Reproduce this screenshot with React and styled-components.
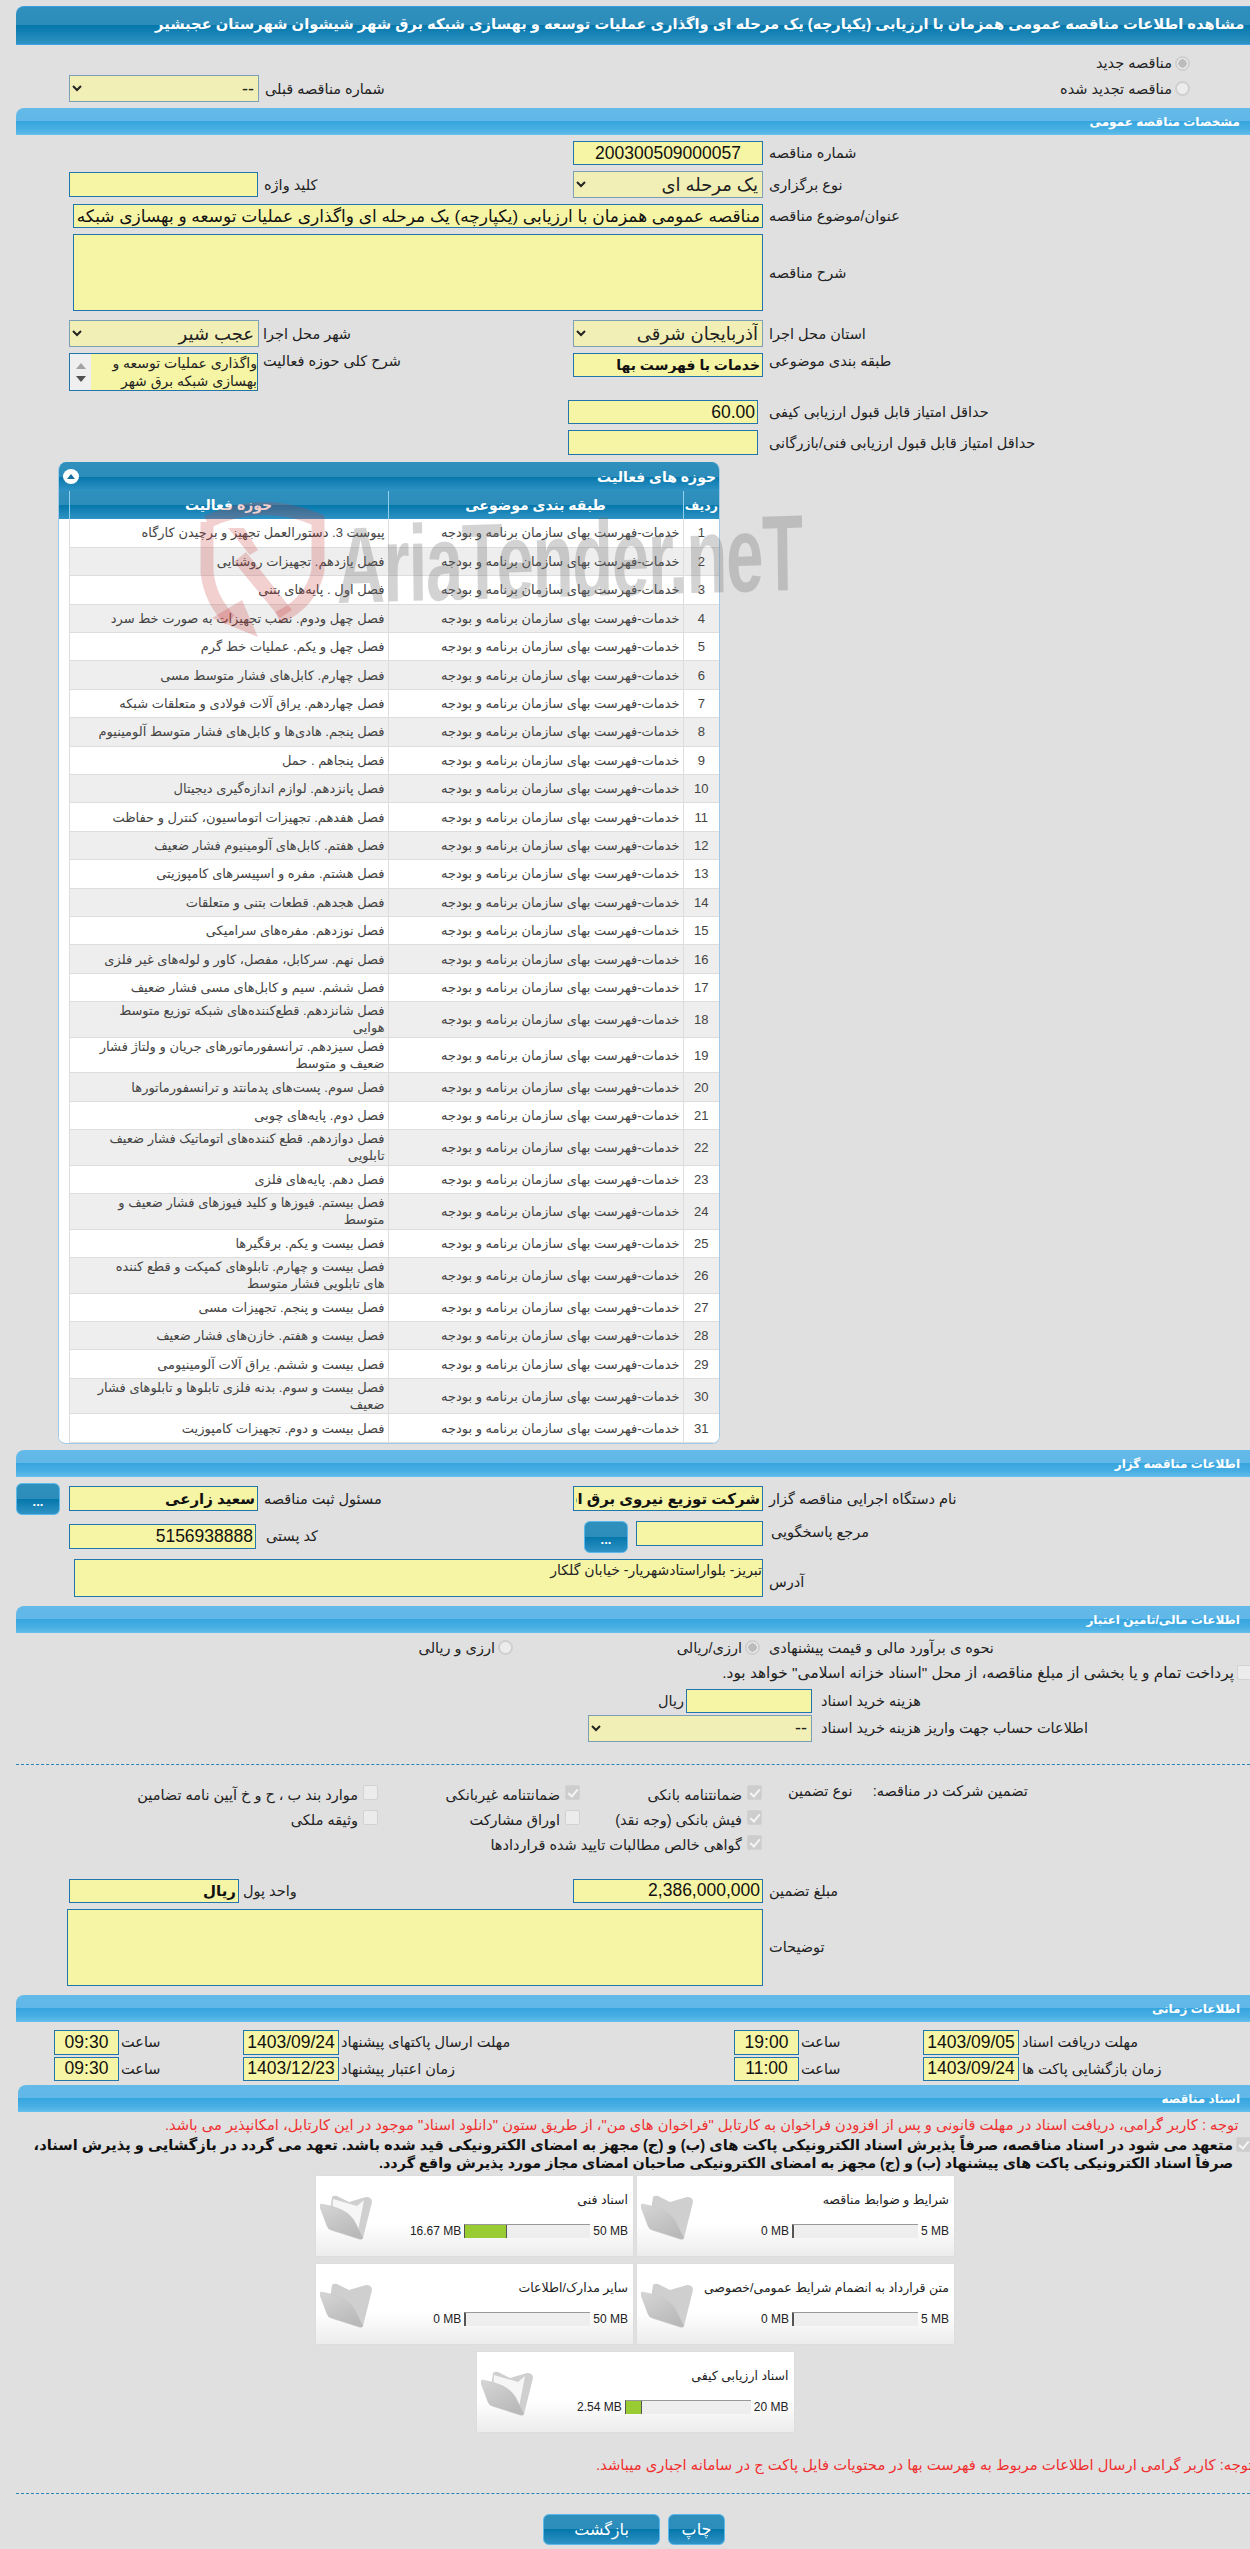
import styled, { createGlobalStyle } from "styled-components";

const GlobalStyle = createGlobalStyle`
  html, body {
    margin: 0;
    padding: 0;
    background: #e0e0e0;
  }
  body {
    font-family: "Liberation Sans", "DejaVu Sans", sans-serif;
    font-size: 14.5px;
    color: #222;
  }
`;

const darkBar = `linear-gradient(to bottom, #2f8fbd 0%, #2c8dbb 50%, #0477ab 50%, #1f87ba 80%, #2f93c5 100%)`;
const lightBar = `linear-gradient(to bottom, #63b9e8 0%, #61b8e8 50%, #36a5df 50%, #47aee3 80%, #5dbbe9 100%)`;

const Page = styled.div`
  position: relative;
  width: 1250px;
  height: 2549px;
  overflow: hidden;
  padding-top: 6px;
  box-sizing: border-box;
`;
const MainTitle = styled.h1`
  margin: 0 0 0 16px;
  height: 39px;
  padding-left: 139px;
  box-sizing: border-box;
  background: ${darkBar};
  border-top: 1px solid #3b9be0;
  border-bottom: 1px solid #3ba0e5;
  border-radius: 8px 0 0 0;
  color: #fff;
  font-size: 14.7px;
  font-weight: bold;
  line-height: 35px;
  white-space: nowrap;
  overflow: hidden;
`;
const SectionBar = styled.h2`
  margin: ${(p) => p.$mt || 0}px 0 0 ${(p) => p.$left || 16}px;
  height: 27px;
  padding-right: 10px;
  box-sizing: border-box;
  background: ${lightBar};
  border-bottom: 1px solid #66c0ee;
  border-radius: 8px 0 0 0;
  color: #fff;
  font-size: 12px;
  font-weight: bold;
  line-height: 28px;
  direction: rtl;
`;
const Row = styled.div`
  display: grid;
  grid-template-columns: ${(p) => p.$cols || "573px 1fr"};
  align-items: ${(p) => p.$align || "center"};
  margin-top: ${(p) => p.$mt || 0}px;
  height: ${(p) => (p.$h ? `${p.$h}px` : "auto")};
`;
const Cell = styled.div`
  display: flex;
  align-items: ${(p) => p.$align || "center"};
  padding-left: ${(p) => p.$inset || 0}px;
  padding-top: ${(p) => p.$top || 0}px;
  gap: ${(p) => (p.$gap === undefined ? 6 : p.$gap)}px;
  min-width: 0;
`;
const Label = styled.span`
  white-space: nowrap;
  direction: rtl;
  text-align: left;
  margin-top: ${(p) => p.$mt || 0}px;
  ${(p) => p.$w && `width: ${p.$w}px;`}
`;
const Field = styled.input`
  box-sizing: border-box;
  width: ${(p) => p.$w}px;
  height: ${(p) => p.$h || 24}px;
  flex: none;
  margin: 0;
  padding: 0 2px;
  background: #f6f5a5;
  border: 1px solid #2376ac;
  color: #111;
  font-family: inherit;
  font-size: ${(p) => p.$size || 17.5}px;
  font-weight: ${(p) => (p.$bold ? "bold" : "normal")};
  text-align: ${(p) => p.$text || "right"};
  direction: ${(p) => p.$dir || "rtl"};
  outline: none;
`;
const Area = styled.textarea`
  display: block;
  box-sizing: border-box;
  width: ${(p) => p.$w}px;
  height: ${(p) => p.$h}px;
  flex: none;
  margin: 0;
  padding: 2px 0 0;
  background: #f6f5a5;
  border: 1px solid #2376ac;
  color: #222;
  font-family: inherit;
  font-size: 14px;
  direction: rtl;
  resize: none;
  outline: none;
  overflow: hidden;
`;
const Pick = styled.select`
  box-sizing: border-box;
  width: ${(p) => p.$w}px;
  height: 27px;
  flex: none;
  margin: 0;
  background-color: #f1efb6;
  border: 1px solid #7b9fb4;
  border-radius: 0;
  color: #222;
  font-family: inherit;
  font-size: 18px;
  direction: rtl;
  opacity: 1;
`;
const ListBox = styled.div`
  box-sizing: border-box;
  width: 189px;
  height: 38px;
  display: flex;
  flex: none;
  overflow: hidden;
  background: #f6f5a5;
  border: 1px solid #2376ac;
`;
const ListScroll = styled.div`
  width: 21px;
  flex: none;
  background: #efefef;
  display: flex;
  flex-direction: column;
  align-items: center;
  justify-content: center;
  gap: 7px;
`;
const Arrow = styled.i`
  width: 0;
  height: 0;
  border-left: 5px solid transparent;
  border-right: 5px solid transparent;
  border-${(p) => (p.$down ? "top" : "bottom")}: 6px solid ${(p) => (p.$down ? "#505050" : "#a3a3a3")};
`;
const ListText = styled.div`
  flex: 1;
  direction: rtl;
  font-size: 14px;
  line-height: 18px;
  color: #222;
`;
const Dot = styled.input`
  appearance: none;
  box-sizing: border-box;
  width: 15px;
  height: 15px;
  flex: none;
  margin: 0;
  border: 2px solid #cfcfcf;
  border-radius: 50%;
  background: #ececec;
  &:checked {
    background: radial-gradient(circle, #bcbcbc 0 4px, #ececec 4.5px);
  }
`;
const Tick = styled.input`
  appearance: none;
  position: relative;
  box-sizing: border-box;
  width: 15px;
  height: 15px;
  flex: none;
  margin: ${(p) => p.$mt || 0}px 0 0 0;
  border: 1px solid #d2d2d2;
  border-radius: 2px;
  background: #ececec;
  &:checked {
    background: #cdcdcd;
  }
  &:checked::after {
    content: "";
    position: absolute;
    left: 4px;
    top: 1px;
    width: 4px;
    height: 8px;
    border: solid #f4f4f4;
    border-width: 0 2px 2px 0;
    transform: rotate(40deg);
  }
`;
const RadioLine = styled.div`
  display: flex;
  align-items: center;
  justify-content: flex-end;
  gap: 3px;
  padding-right: ${(p) => p.$pr || 0}px;
  margin-top: ${(p) => p.$mt || 0}px;
  margin-right: ${(p) => p.$mr || 0}px;
  height: ${(p) => (p.$h ? `${p.$h}px` : "auto")};
  font-size: ${(p) => p.$size || 14.5}px;
  white-space: nowrap;
`;
const Panel = styled.section`
  margin: ${(p) => p.$mt || 0}px 0 0 58px;
  width: 662px;
  box-sizing: border-box;
  background: #fff;
  border: 1px solid #9fcbe8;
  border-top: 0;
  border-radius: 8px 8px 8px 8px;
  overflow: hidden;
`;
const PanelHead = styled.div`
  height: 29px;
  display: flex;
  align-items: center;
  justify-content: space-between;
  padding: 0 3px 0 4px;
  background: ${darkBar};
  color: #fff;
  font-size: 14px;
  font-weight: bold;
`;
const Toggle = styled.span`
  width: 16px;
  height: 15px;
  border-radius: 50%;
  background: #fff;
  display: flex;
  align-items: center;
  justify-content: center;
  &::before {
    content: "";
    border-left: 4px solid transparent;
    border-right: 4px solid transparent;
    border-bottom: 5px solid #17709f;
  }
`;
const Table = styled.table`
  width: 100%;
  border-collapse: collapse;
  table-layout: fixed;
  direction: rtl;
  font-size: 13px;
  color: #444;
`;
const HeadCell = styled.th`
  height: 28px;
  padding: 0;
  background: ${darkBar};
  border-left: 1px solid #8fd0ef;
  color: #fff;
  font-size: ${(p) => p.$size || 14}px;
  font-weight: bold;
  white-space: nowrap;
  &:last-child {
    border-left: 0;
  }
`;
const BodyRow = styled.tr`
  background: ${(p) => (p.$alt ? "#eeeeee" : "#ffffff")};
`;
const BodyCell = styled.td`
  height: 28.4px;
  padding: 0.3px 3px;
  box-sizing: border-box;
  border-left: 1px solid #ddd;
  border-bottom: 1px solid #ddd;
  line-height: 17px;
  text-align: ${(p) => p.$text || "right"};
  white-space: pre-line;
`;
const FillCell = styled.td`
  background: #fff;
  padding: 0;
`;
const Dashed = styled.hr`
  margin: ${(p) => p.$mt || 0}px 0 0 ${(p) => p.$left || 16}px;
  border: 0;
  border-top: 1px dashed #2a86b8;
`;
const BlueButton = styled.button`
  box-sizing: border-box;
  width: ${(p) => p.$w}px;
  height: ${(p) => p.$h}px;
  flex: none;
  margin: 0;
  padding: ${(p) => p.$pt || 0}px 0 0;
  background: ${darkBar};
  border: 1px solid #5ab8ea;
  border-radius: 6px;
  color: #fff;
  font-family: inherit;
  font-size: ${(p) => p.$size || 16}px;
  font-weight: ${(p) => (p.$bold ? "bold" : "normal")};
`;
const Options = styled.div`
  display: grid;
  grid-template-columns: 378px 202px 182px 1fr;
  grid-auto-rows: 25px;
  margin-top: 18px;
`;
const Option = styled.div`
  grid-column: ${(p) => p.$col};
  display: flex;
  align-items: center;
  justify-content: flex-end;
  gap: 5px;
  white-space: nowrap;
`;
const Caption = styled.div`
  display: flex;
  gap: 20px;
  padding-left: 26px;
  white-space: nowrap;
  direction: ltr;
`;
const NoteLine = styled.div`
  height: 18px;
  line-height: 18px;
  margin-top: ${(p) => p.$mt || 0}px;
  padding-left: ${(p) => p.$left || 0}px;
  color: ${(p) => p.$color || "#111"};
  font-size: ${(p) => p.$size || 14.7}px;
  font-weight: ${(p) => (p.$bold ? "bold" : "normal")};
  white-space: nowrap;
  overflow: hidden;
`;
const BoldFirstLine = styled.div`
  display: flex;
  justify-content: flex-end;
  align-items: center;
  gap: 3px;
  height: 18px;
  margin-top: 2px;
  font-size: 14.7px;
  font-weight: bold;
  color: #111;
  white-space: nowrap;
  margin-right: -1px;
`;
const CardWrap = styled.div`
  display: flex;
  flex-wrap: wrap;
  justify-content: center;
  gap: 8px 4px;
  width: 638px;
  margin: 4px 0 0 316px;
  direction: rtl;
`;
const Card = styled.div`
  box-sizing: border-box;
  width: 317px;
  height: 80px;
  display: flex;
  direction: ltr;
  background: linear-gradient(to bottom, #fff 0%, #fff 60%, #ececec 100%);
  box-shadow: 0 0 1px #cfcfcf;
`;
const CardBody = styled.div`
  flex: 1;
  padding: 16px 5px 0 0;
`;
const CardTitle = styled.div`
  direction: rtl;
  font-size: 12.5px;
  line-height: 17px;
  color: #222;
  white-space: nowrap;
`;
const Usage = styled.div`
  display: flex;
  justify-content: flex-end;
  align-items: center;
  gap: 3px;
  margin-top: 15px;
  font-size: 12px;
  color: #222;
`;
const Meter = styled.div`
  box-sizing: border-box;
  width: 126px;
  height: 14px;
  flex: none;
  background: #eee;
  border-top: 1px solid #999;
  border-left: 1px solid #555;
`;
const MeterFill = styled.div`
  height: 100%;
  box-sizing: border-box;
  background: #99cc33;
  border-right: 1px solid #555;
`;
const FolderIcon = styled.svg`
  flex: none;
  width: 52px;
  height: 46px;
  margin: 19px 0 0 4px;
`;
const Actions = styled.div`
  display: flex;
  gap: 8px;
  margin-top: 20px;
  padding-left: 543px;
`;
const Watermark = styled.div`
  position: absolute;
  left: 200px;
  top: 500px;
  width: 600px;
  height: 140px;
  pointer-events: none;
`;
const WaterShield = styled.svg`
  position: absolute;
  left: 0;
  top: 0;
  width: 125px;
  height: 140px;
`;
const WaterText = styled.div`
  position: absolute;
  left: 136px;
  top: 12px;
  font-family: "Liberation Sans", sans-serif;
  font-size: 108px;
  font-weight: bold;
  line-height: 108px;
  letter-spacing: -2px;
  color: rgba(110, 110, 110, 0.3);
  white-space: nowrap;
  direction: ltr;
  transform: scaleX(0.62) rotate(-1deg);
  transform-origin: left top;
`;

const BIDDER = "خدمات-فهرست بهای سازمان برنامه و بودجه";
const ACTIVITIES = [
  "پیوست 3. دستورالعمل تجهیز و برچیدن کارگاه",
  "فصل یازدهم. تجهیزات روشنایی",
  "فصل اول . پایه‌های بتنی",
  "فصل چهل ودوم. نصب تجهیزات به صورت خط سرد",
  "فصل چهل و یکم. عملیات خط گرم",
  "فصل چهارم. کابل‌های فشار متوسط مسی",
  "فصل چهاردهم. یراق آلات فولادی و متعلقات شبکه",
  "فصل پنجم. هادی‌ها و کابل‌های فشار متوسط آلومینیوم",
  "فصل پنجاهم . حمل",
  "فصل پانزدهم. لوازم اندازه‌گیری دیجیتال",
  "فصل هفدهم. تجهیزات اتوماسیون، کنترل و حفاظت",
  "فصل هفتم. کابل‌های آلومینیوم فشار ضعیف",
  "فصل هشتم. مفره و اسپیسرهای کامپوزیتی",
  "فصل هجدهم. قطعات بتنی و متعلقات",
  "فصل نوزدهم. مفره‌های سرامیکی",
  "فصل نهم. سرکابل، مفصل، کاور و لوله‌های غیر فلزی",
  "فصل ششم. سیم و کابل‌های مسی فشار ضعیف",
  "فصل شانزدهم. قطع‌کننده‌های شبکه توزیع متوسط\nهوایی",
  "فصل سیزدهم. ترانسفورماتورهای جریان و ولتاژ فشار\nضعیف و متوسط",
  "فصل سوم. پست‌های پدمانتد و ترانسفورماتورها",
  "فصل دوم. پایه‌های چوبی",
  "فصل دوازدهم. قطع کننده‌های اتوماتیک فشار ضعیف\nتابلویی",
  "فصل دهم. پایه‌های فلزی",
  "فصل بیستم. فیوزها و کلید فیوزهای فشار ضعیف و\nمتوسط",
  "فصل بیست و یکم. برقگیرها",
  "فصل بیست و چهارم. تابلوهای کمپکت و قطع کننده\nهای تابلویی فشار متوسط",
  "فصل بیست و پنجم. تجهیزات مسی",
  "فصل بیست و هفتم. خازن‌های فشار ضعیف",
  "فصل بیست و ششم. یراق آلات آلومینیومی",
  "فصل بیست و سوم. بدنه فلزی تابلوها و تابلوهای فشار\nضعیف",
  "فصل بیست و دوم. تجهیزات کامپوزیت",
];
const DOCS = [
  { title: "شرایط و ضوابط مناقصه", used: 0, max: 5 },
  { title: "اسناد فنی", used: 16.67, max: 50 },
  { title: "متن قرارداد به انضمام شرایط عمومی/خصوصی", used: 0, max: 5 },
  { title: "سایر مدارک/اطلاعات", used: 0, max: 50 },
  { title: "اسناد ارزیابی کیفی", used: 2.54, max: 20 },
];

const Folder = ({ full }) => (
  <FolderIcon viewBox="0 0 52 46">
    <defs>
      <linearGradient id="fold" x1="0" y1="0" x2="0.6" y2="1">
        <stop offset="0" stopColor="#d6d6d6" />
        <stop offset="1" stopColor="#b9b9b9" />
      </linearGradient>
    </defs>
    <path d="M12 2Q14 0 17 1L29 7L46 2Q52 2 52 7L43 43Q42 45 40 44L8 30Z" fill="#cfcfcf" />
    {full && <path d="M13 4L37 11L44 5L38 36L12 20Z" fill="#f6f6f6" />}
    <path d="M1 9Q14 11 22 15Q32 20 36 29L43 43Q42 45 39 44L11 35Q8 34 7 31L0 12Q0 9 1 9Z" fill="url(#fold)" stroke="#c4c4c4" strokeWidth="0.5" />
  </FolderIcon>
);

export default function App() {
  return (
    <Page>
      <GlobalStyle />
      <MainTitle>
        <span dir="rtl">
          مشاهده اطلاعات مناقصه عمومی همزمان با ارزیابی (یکپارچه) یک مرحله ای واگذاری عملیات توسعه و بهسازی شبکه برق شهر شیشوان شهرستان عجبشیر
        </span>
      </MainTitle>

      <RadioLine $pr={60} $mt={7} $h={22}>
        <span dir="rtl">مناقصه جدید</span>
        <Dot type="radio" name="kind" disabled defaultChecked />
      </RadioLine>
      <Row $mt={1}>
        <Cell $inset={69}>
          <Pick $w={190} disabled>
            <option>--</option>
          </Pick>
          <Label>شماره مناقصه قبلی</Label>
        </Cell>
        <RadioLine $pr={60}>
          <span dir="rtl">مناقصه تجدید شده</span>
          <Dot type="radio" name="kind" disabled />
        </RadioLine>
      </Row>

      <SectionBar $mt={6}>مشخصات مناقصه عمومی</SectionBar>
      <Row $mt={6}>
        <span />
        <Cell>
          <Field $w={190} readOnly value="200300509000057" $text="center" />
          <Label>شماره مناقصه</Label>
        </Cell>
      </Row>
      <Row $mt={6}>
        <Cell $inset={69}>
          <Field $w={189} $h={25} readOnly value="" />
          <Label>کلید واژه</Label>
        </Cell>
        <Cell>
          <Pick $w={190} disabled>
            <option>یک مرحله ای</option>
          </Pick>
          <Label>نوع برگزاری</Label>
        </Cell>
      </Row>
      <Row $mt={6} $cols="73px 1fr">
        <span />
        <Cell>
          <Field $w={690} readOnly $size={17} value="مناقصه عمومی همزمان با ارزیابی (یکپارچه) یک مرحله ای واگذاری عملیات توسعه و بهسازی شبکه برق شهر شیشوان شهرستان عجبشیر" />
          <Label>عنوان/موضوع مناقصه</Label>
        </Cell>
      </Row>
      <Row $mt={6} $cols="73px 1fr">
        <span />
        <Cell>
          <Area $w={690} $h={77} readOnly />
          <Label>شرح مناقصه</Label>
        </Cell>
      </Row>
      <Row $mt={9}>
        <Cell $inset={69} $gap={4}>
          <Pick $w={190} disabled>
            <option>عجب شیر</option>
          </Pick>
          <Label>شهر محل اجرا</Label>
        </Cell>
        <Cell>
          <Pick $w={190} disabled>
            <option>آذربایجان شرقی</option>
          </Pick>
          <Label>استان محل اجرا</Label>
        </Cell>
      </Row>
      <Row $mt={6} $align="start">
        <Cell $inset={69} $align="flex-start" $gap={5}>
          <ListBox>
            <ListScroll>
              <Arrow />
              <Arrow $down />
            </ListScroll>
            <ListText>واگذاری عملیات توسعه و بهسازی شبکه برق شهر شیشوان</ListText>
          </ListBox>
          <Label>شرح کلی حوزه فعالیت</Label>
        </Cell>
        <Cell $align="flex-start">
          <Field $w={190} readOnly $size={14} $bold value="خدمات با فهرست بها" />
          <Label>طبقه بندی موضوعی</Label>
        </Cell>
      </Row>
      <Row $mt={9} $cols="568px 1fr">
        <span />
        <Cell $gap={11}>
          <Field $w={190} readOnly value="60.00" />
          <Label>حداقل امتیاز قابل قبول ارزیابی کیفی</Label>
        </Cell>
      </Row>
      <Row $mt={6} $cols="568px 1fr">
        <span />
        <Cell $gap={11}>
          <Field $w={190} $h={25} readOnly value="" />
          <Label>حداقل امتیاز قابل قبول ارزیابی فنی/بازرگانی</Label>
        </Cell>
      </Row>

      <Panel $mt={7}>
        <PanelHead>
          <Toggle />
          <span dir="rtl">حوزه های فعالیت</span>
        </PanelHead>
        <Table>
          <colgroup>
            <col style={{ width: 36 }} />
            <col style={{ width: 295 }} />
            <col style={{ width: 319 }} />
            <col />
          </colgroup>
          <thead>
            <tr>
              <HeadCell $size={12.5}>ردیف</HeadCell>
              <HeadCell>طبقه بندی موضوعی</HeadCell>
              <HeadCell>حوزه فعالیت</HeadCell>
              <HeadCell />
            </tr>
          </thead>
          <tbody>
            {ACTIVITIES.map((text, i) => (
              <BodyRow key={i} $alt={i % 2 === 1}>
                <BodyCell $text="center">{i + 1}</BodyCell>
                <BodyCell>{BIDDER}</BodyCell>
                <BodyCell>{text}</BodyCell>
                <FillCell />
              </BodyRow>
            ))}
          </tbody>
        </Table>
      </Panel>

      <SectionBar $mt={6}>اطلاعات مناقصه گزار</SectionBar>
      <Row $mt={6} $cols="60px 513px 1fr">
        <Cell $inset={16}>
          <BlueButton $w={44} $h={32} $size={13} $bold $pt={6}>...</BlueButton>
        </Cell>
        <Cell $inset={9}>
          <Field $w={189} $h={25} readOnly $size={15} $bold value="سعید زارعی" />
          <Label>مسئول ثبت مناقصه</Label>
        </Cell>
        <Cell>
          <Field $w={190} $h={25} readOnly $size={15} $bold value="شرکت توزیع نیروی برق استان آذربایجان شرقی" />
          <Label>نام دستگاه اجرایی مناقصه گزار</Label>
        </Cell>
      </Row>
      <Row $mt={6} $align="start">
        <Cell $inset={69} $gap={10} $top={3}>
          <Field $w={187} $h={25} readOnly value="5156938888" />
          <Label>کد پستی</Label>
        </Cell>
        <Cell $inset={11} $gap={8} $align="flex-start">
          <BlueButton $w={44} $h={32} $size={13} $bold $pt={6}>...</BlueButton>
          <Field $w={127} $h={25} readOnly value="" />
          <Label $mt={3}>مرجع پاسخگویی</Label>
        </Cell>
      </Row>
      <Row $mt={6} $cols="74px 1fr">
        <span />
        <Cell>
          <Area $w={689} $h={38} readOnly value="تبریز- بلواراستادشهریار- خیابان گلکار" />
          <Label $mt={8}>آدرس</Label>
        </Cell>
      </Row>

      <SectionBar $mt={9}>اطلاعات مالی/تامین اعتبار</SectionBar>
      <Row $mt={3} $cols="513px 256px 1fr" $h={24}>
        <RadioLine>
          <span dir="rtl">ارزی و ریالی</span>
          <Dot type="radio" name="cur" disabled />
        </RadioLine>
        <RadioLine $pr={9}>
          <span dir="rtl">ارزی/ریالی</span>
          <Dot type="radio" name="cur" disabled defaultChecked />
        </RadioLine>
        <Label>نحوه ی برآورد مالی و قیمت پیشنهادی</Label>
      </Row>
      <RadioLine $h={22} $mt={2} $mr={-2} $size={15.4}>
        <span dir="rtl">پرداخت تمام و یا بخشی از مبلغ مناقصه، از محل "اسناد خزانه اسلامی" خواهد بود.</span>
        <Tick type="checkbox" disabled />
      </RadioLine>
      <Row $mt={5} $cols="662px 1fr">
        <span />
        <Cell $gap={9}>
          <Cell $gap={2}>
            <Label $w={22}>ریال</Label>
            <Field $w={126} readOnly value="" />
          </Cell>
          <Label>هزینه خرید اسناد</Label>
        </Cell>
      </Row>
      <Row $mt={2} $cols="588px 1fr">
        <span />
        <Cell $gap={9}>
          <Pick $w={224} disabled>
            <option>--</option>
          </Pick>
          <Label>اطلاعات حساب جهت واریز هزینه خرید اسناد</Label>
        </Cell>
      </Row>
      <Dashed $mt={22} />

      <Options>
        <Option $col={1}>
          <span dir="rtl">موارد بند ب ، ح و خ آیین نامه تضامین</span>
          <Tick type="checkbox" disabled $mt={-5} />
        </Option>
        <Option $col={2}>
          <span dir="rtl">ضمانتنامه غیربانکی</span>
          <Tick type="checkbox" disabled defaultChecked $mt={-5} />
        </Option>
        <Option $col={3}>
          <span dir="rtl">ضمانتنامه بانکی</span>
          <Tick type="checkbox" disabled defaultChecked $mt={-5} />
        </Option>
        <Caption>
          <span dir="rtl">نوع تضمین</span>
          <span dir="rtl">تضمین شرکت در مناقصه:</span>
        </Caption>
        <Option $col={1}>
          <span dir="rtl">وثیقه ملکی</span>
          <Tick type="checkbox" disabled $mt={-5} />
        </Option>
        <Option $col={2}>
          <span dir="rtl">اوراق مشارکت</span>
          <Tick type="checkbox" disabled $mt={-5} />
        </Option>
        <Option $col={3}>
          <span dir="rtl">فیش بانکی (وجه نقد)</span>
          <Tick type="checkbox" disabled defaultChecked $mt={-5} />
        </Option>
        <Option $col={3}>
          <span dir="rtl">گواهی خالص مطالبات تایید شده قراردادها</span>
          <Tick type="checkbox" disabled defaultChecked $mt={-5} />
        </Option>
      </Options>

      <Row $mt={21}>
        <Cell $inset={69} $gap={4}>
          <Field $w={170} readOnly $size={15} $bold value="ریال" />
          <Label>واحد پول</Label>
        </Cell>
        <Cell>
          <Field $w={190} readOnly value="2,386,000,000" $dir="ltr" />
          <Label>مبلغ تضمین</Label>
        </Cell>
      </Row>
      <Row $mt={6} $cols="67px 1fr">
        <span />
        <Cell>
          <Area $w={696} $h={77} readOnly />
          <Label>توضیحات</Label>
        </Cell>
      </Row>

      <SectionBar $mt={9}>اطلاعات زمانی</SectionBar>
      <Row $mt={8} $cols="243px 491px 189px 1fr">
        <Cell $inset={54} $gap={2}>
          <Field $w={65} $h={25} readOnly value="09:30" $text="center" $dir="ltr" />
          <Label>ساعت</Label>
        </Cell>
        <Cell $gap={2}>
          <Field $w={96} $h={25} readOnly value="1403/09/24" $text="center" $dir="ltr" />
          <Label>مهلت ارسال پاکتهای پیشنهاد</Label>
        </Cell>
        <Cell $gap={2}>
          <Field $w={65} $h={25} readOnly value="19:00" $text="center" $dir="ltr" />
          <Label>ساعت</Label>
        </Cell>
        <Cell $gap={3}>
          <Field $w={96} $h={25} readOnly value="1403/09/05" $text="center" $dir="ltr" />
          <Label>مهلت دریافت اسناد</Label>
        </Cell>
      </Row>
      <Row $mt={2} $cols="243px 491px 189px 1fr">
        <Cell $inset={54} $gap={2}>
          <Field $w={65} readOnly value="09:30" $text="center" $dir="ltr" />
          <Label>ساعت</Label>
        </Cell>
        <Cell $gap={2}>
          <Field $w={96} readOnly value="1403/12/23" $text="center" $dir="ltr" />
          <Label>زمان اعتبار پیشنهاد</Label>
        </Cell>
        <Cell $gap={2}>
          <Field $w={65} readOnly value="11:00" $text="center" $dir="ltr" />
          <Label>ساعت</Label>
        </Cell>
        <Cell $gap={3}>
          <Field $w={96} readOnly value="1403/09/24" $text="center" $dir="ltr" />
          <Label>زمان بازگشایی پاکت ها</Label>
        </Cell>
      </Row>

      <SectionBar $mt={4} $left={18}>اسناد مناقصه</SectionBar>
      <NoteLine $color="#f03030" $left={165} $mt={4}>
        <span dir="rtl">
          توجه : کاربر گرامی، دریافت اسناد در مهلت قانونی و پس از افزودن فراخوان به کارتابل "فراخوان های من"، از طریق ستون "دانلود اسناد" موجود در این کارتابل، امکانپذیر می باشد.
        </span>
      </NoteLine>
      <BoldFirstLine>
        <span dir="rtl">
          متعهد می شود در اسناد مناقصه، صرفاً پذیرش اسناد الکترونیکی پاکت های (ب) و (ج) مجهز به امضای الکترونیکی قید شده باشد. تعهد می گردد در بازگشایی و پذیرش اسناد،
        </span>
        <Tick type="checkbox" disabled defaultChecked />
      </BoldFirstLine>
      <NoteLine $bold $left={379} $size={14.35}>
        <span dir="rtl">
          صرفاً اسناد الکترونیکی پاکت های پیشنهاد (ب) و (ج) مجهز به امضای الکترونیکی صاحبان امضای مجاز مورد پذیرش واقع گردد.
        </span>
      </NoteLine>

      <CardWrap>
        {DOCS.map((doc) => (
          <Card key={doc.title}>
            <Folder full={doc.used > 0} />
            <CardBody>
              <CardTitle>{doc.title}</CardTitle>
              <Usage>
                <span>{doc.used} MB</span>
                <Meter>
                  <MeterFill style={{ width: `${(doc.used / doc.max) * 100}%` }} />
                </Meter>
                <span>{doc.max} MB</span>
              </Usage>
            </CardBody>
          </Card>
        ))}
      </CardWrap>

      <NoteLine $color="#f03030" $left={596} $mt={24} $size={14.8}>
        <span dir="rtl">
          توجه: کاربر گرامی ارسال اطلاعات مربوط به فهرست بها در محتویات فایل پاکت ج در سامانه اجباری میباشد.
        </span>
      </NoteLine>
      <Dashed $mt={19} $left={0} />
      <Actions>
        <BlueButton $w={117} $h={31}>بازگشت</BlueButton>
        <BlueButton $w={57} $h={31}>چاپ</BlueButton>
      </Actions>

      <Watermark>
        <WaterShield viewBox="0 0 125 140">
          <path d="M7 22Q62 -4 118 20L118 70Q112 102 78 118M7 22L7 72Q10 100 30 120" fill="none" stroke="rgba(200,60,60,0.24)" strokeWidth="13" />
          <path d="M28 28L50 55L38 62L58 50L44 28ZM46 52L92 110L80 118L34 62Z" fill="rgba(200,60,60,0.24)" />
          <path d="M12 118L58 137L42 100Z" fill="rgba(200,60,60,0.24)" />
        </WaterShield>
        <WaterText>AriaTender.neT</WaterText>
      </Watermark>
    </Page>
  );
}
